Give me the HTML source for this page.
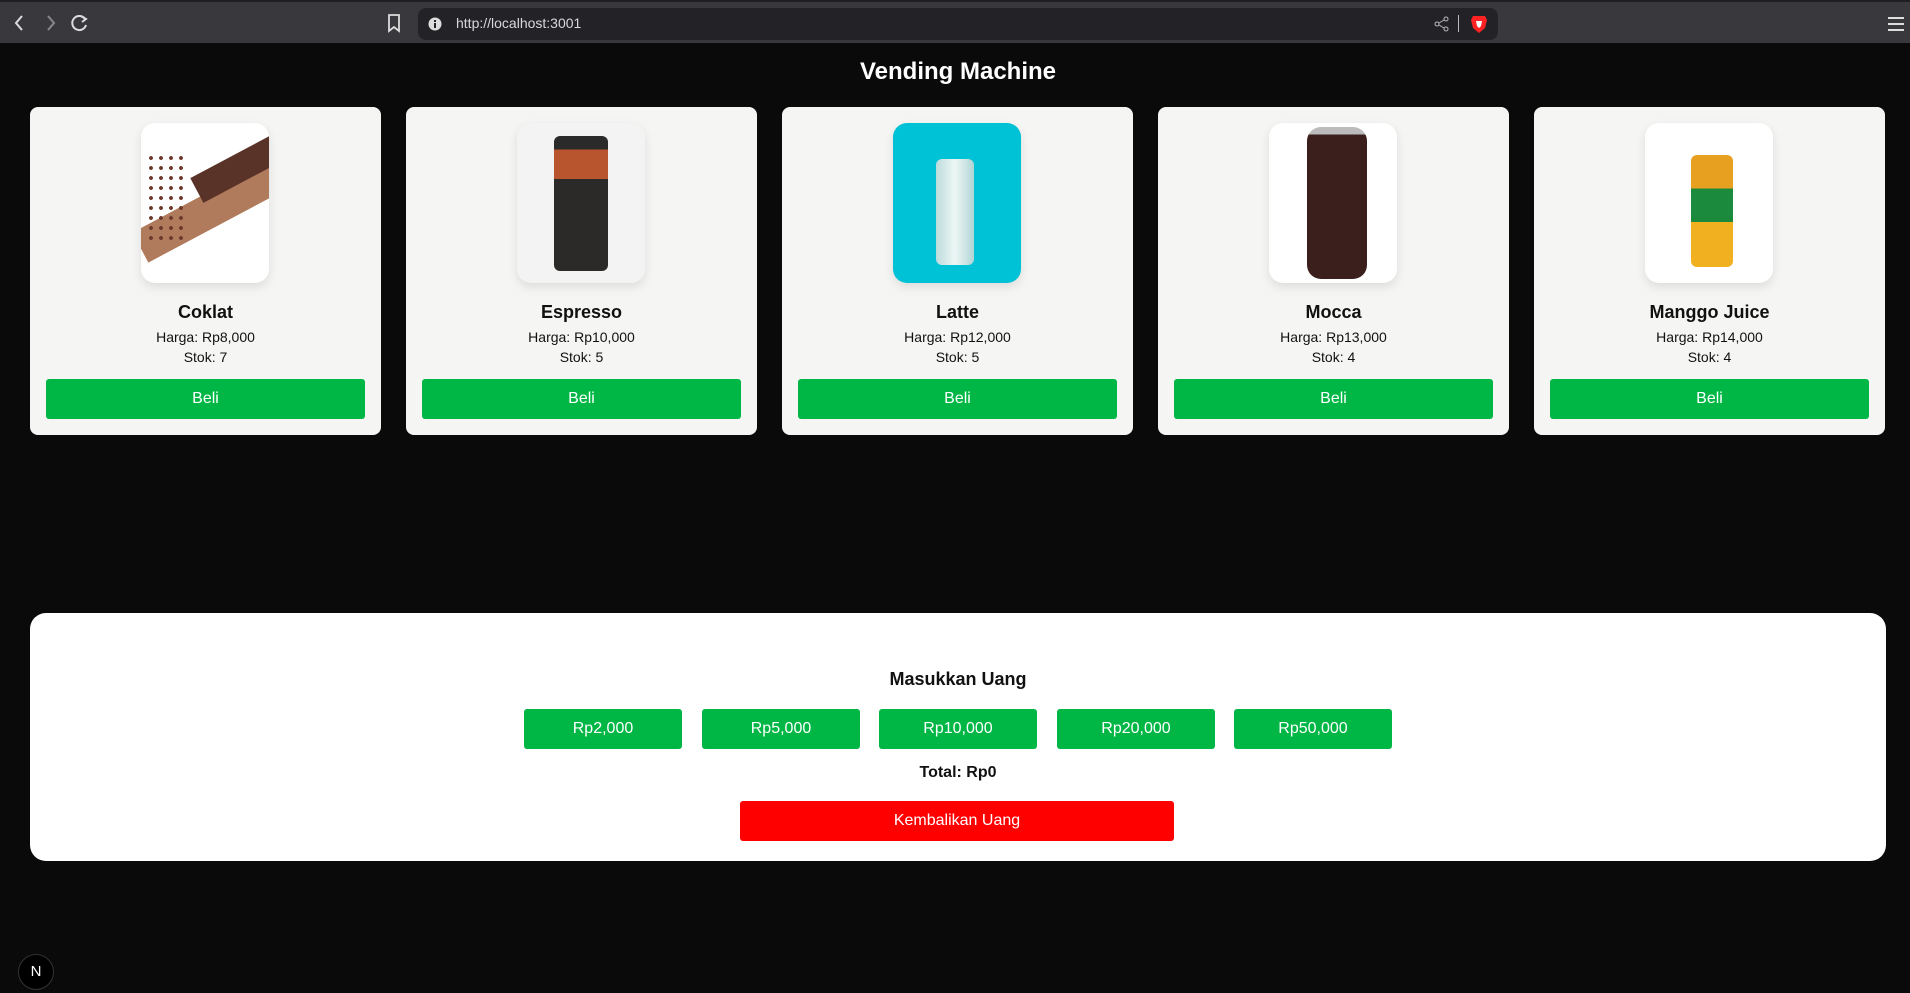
<!DOCTYPE html>
<html><head><meta charset="utf-8"><style>
*{margin:0;padding:0;box-sizing:border-box}
body{width:1910px;height:993px;background:#0a0a0a;font-family:"Liberation Sans",sans-serif;position:relative;overflow:hidden}
.chrome{position:absolute;left:0;top:0;width:1910px;height:43px;background:#39383d;border-top:2px solid #1f1f22}
.url{position:absolute;left:418px;top:6px;width:1080px;height:32px;background:#232327;border-radius:8px}
.url span{position:absolute;left:38px;top:7px;color:#d8d8d8;font-size:14px}
h1{position:absolute;top:58px;width:1916px;left:0;text-align:center;color:#fff;font-size:24px;font-weight:bold}
.card{position:absolute;top:107px;width:351px;height:328px;background:#f5f5f3;border-radius:8px;text-align:center}
.img{position:absolute;left:111px;top:16px;width:128px;height:160px;border-radius:14px;background:#fff;box-shadow:0 4px 10px rgba(0,0,0,.1);overflow:hidden}
.t{position:absolute;top:195px;width:100%;font-size:18px;font-weight:bold;color:#111}
.p{position:absolute;top:222px;width:100%;font-size:14px;color:#111}
.s{position:absolute;top:242px;width:100%;font-size:14px;color:#111}
.b{position:absolute;left:16px;top:272px;width:319px;height:40px;background:#00b746;border-radius:3px;color:#fff;font-size:16px;line-height:40px}
.panel{position:absolute;left:30px;top:613px;width:1856px;height:248px;background:#fff;border-radius:16px}
.mh{position:absolute;top:56px;width:100%;text-align:center;font-size:18px;font-weight:bold;color:#111}
.m{position:absolute;top:96px;width:158px;height:40px;background:#00b746;border-radius:3px;color:#fff;font-size:16px;line-height:40px;text-align:center}
.tot{position:absolute;top:151px;width:100%;text-align:center;font-size:16px;font-weight:bold;color:#111}
.red{position:absolute;left:710px;top:188px;width:434px;height:40px;background:#ff0000;border-radius:3px;color:#fff;font-size:16px;line-height:40px;text-align:center}
.can{position:absolute;border-radius:6px}
</style></head><body>
<div class="chrome">
<svg style="position:absolute;left:10px;top:10px" width="60" height="22"><path d="M12 4 L6 11 L12 18" stroke="#ddd" stroke-width="2" fill="none"/><path d="M38 4 L44 11 L38 18" stroke="#888" stroke-width="2" fill="none"/></svg>
<svg style="position:absolute;left:70px;top:11px" width="20" height="20"><path d="M15 6 A7 7 0 1 0 16 12" stroke="#ddd" stroke-width="2" fill="none"/><path d="M11 3 L16 6 L12 9" stroke="#ddd" stroke-width="2" fill="none"/></svg>
<svg style="position:absolute;left:387px;top:12px" width="14" height="20"><path d="M2 1 H12 V17 L7 13 L2 17 Z" stroke="#ddd" stroke-width="1.8" fill="none"/></svg>
<div class="url"><svg style="position:absolute;left:10px;top:9px" width="14" height="14"><circle cx="7" cy="7" r="6.5" fill="#ddd"/><rect x="6" y="6" width="2" height="5" fill="#232327"/><rect x="6" y="3" width="2" height="2" fill="#232327"/></svg><span>http://localhost:3001</span>
<svg style="position:absolute;left:1016px;top:8px" width="16" height="16"><circle cx="3" cy="8" r="2" stroke="#bbb" fill="none"/><circle cx="12" cy="3" r="2" stroke="#bbb" fill="none"/><circle cx="12" cy="13" r="2" stroke="#bbb" fill="none"/><path d="M5 7 L10 4 M5 9 L10 12" stroke="#bbb"/></svg>
<div style="position:absolute;left:1040px;top:7px;width:1px;height:17px;background:#bbb"></div>
<svg style="position:absolute;left:1052px;top:6px" width="18" height="20"><path d="M3 2 H15 L17 6 L15 14 L9 19 L3 14 L1 6 Z" fill="#f22"/><path d="M6 7 H12 L11 12 L9 14 L7 12 Z" fill="#fff"/></svg>
</div>
<svg style="position:absolute;left:1887px;top:14px" width="18" height="16"><path d="M1 2H17M1 8H17M1 14H17" stroke="#ddd" stroke-width="2"/></svg>
</div>
<h1>Vending Machine</h1>

<div class="card" style="left:30px"><div class="img">
<div style="position:absolute;left:-10px;top:70px;width:160px;height:34px;background:#b07a5c;transform:rotate(-28deg)"></div>
<div style="position:absolute;left:50px;top:30px;width:100px;height:28px;background:#5a3328;transform:rotate(-28deg)"></div>
<div style="position:absolute;left:5px;top:30px;width:40px;height:90px;background:radial-gradient(#6b3a2c 25%,transparent 30%) 0 0/10px 10px"></div>
</div><div class="t">Coklat</div><div class="p">Harga: Rp8,000</div><div class="s">Stok: 7</div><div class="b">Beli</div></div>

<div class="card" style="left:406px"><div class="img" style="background:#f3f3f3">
<div class="can" style="left:37px;top:13px;width:54px;height:135px;background:linear-gradient(#2a2a2a 0 10%,#b8552e 10% 32%,#2c2a28 32%)"></div>
</div><div class="t">Espresso</div><div class="p">Harga: Rp10,000</div><div class="s">Stok: 5</div><div class="b">Beli</div></div>

<div class="card" style="left:782px"><div class="img" style="background:#00c2d6">
<div class="can" style="left:43px;top:36px;width:38px;height:106px;background:linear-gradient(90deg,#bcdcdc,#eef7f5,#b0d4d4)"></div>
</div><div class="t">Latte</div><div class="p">Harga: Rp12,000</div><div class="s">Stok: 5</div><div class="b">Beli</div></div>

<div class="card" style="left:1158px"><div class="img">
<div class="can" style="left:38px;top:4px;width:60px;height:152px;background:linear-gradient(#bbb 0 5%,#3a1f1c 5%);border-radius:14px"></div>
</div><div class="t">Mocca</div><div class="p">Harga: Rp13,000</div><div class="s">Stok: 4</div><div class="b">Beli</div></div>

<div class="card" style="left:1534px"><div class="img">
<div class="can" style="left:46px;top:32px;width:42px;height:112px;background:linear-gradient(#e8a020 0 30%,#1c8a3c 30% 60%,#f0b020 60%)"></div>
</div><div class="t">Manggo Juice</div><div class="p">Harga: Rp14,000</div><div class="s">Stok: 4</div><div class="b">Beli</div></div>

<div class="panel">
<div class="mh">Masukkan Uang</div>
<div class="m" style="left:494px">Rp2,000</div>
<div class="m" style="left:672px">Rp5,000</div>
<div class="m" style="left:849px">Rp10,000</div>
<div class="m" style="left:1027px">Rp20,000</div>
<div class="m" style="left:1204px">Rp50,000</div>
<div class="tot">Total: Rp0</div>
<div class="red">Kembalikan Uang</div>
</div>

<div style="position:absolute;left:18px;top:954px;width:36px;height:36px;border-radius:50%;background:#000;border:1px solid #333;color:#fff;font-size:15px;text-align:center;line-height:34px">N</div>
</body></html>
